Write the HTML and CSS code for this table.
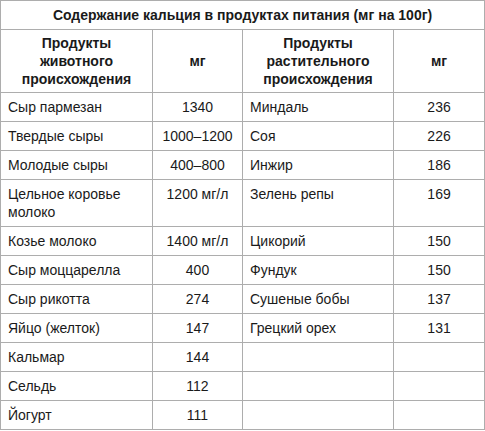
FILE: index.html
```html
<!DOCTYPE html>
<html lang="ru">
<head>
<meta charset="utf-8">
<title>Содержание кальция</title>
<link rel="stylesheet" href="styles.css">
</head>
<body>
<table class="calcium">
  <colgroup>
    <col class="c-name"><col class="c-val"><col class="c-name2"><col class="c-val2">
  </colgroup>
  <thead>
    <tr><th class="title" colspan="4">Содержание кальция в продуктах питания (мг на 100г)</th></tr>
    <tr class="head">
      <th>Продукты<br>животного<br>происхождения</th>
      <th>мг</th>
      <th>Продукты<br>растительного<br>происхождения</th>
      <th>мг</th>
    </tr>
  </thead>
  <tbody>
    <tr><td>Сыр пармезан</td><td class="num">1340</td><td>Миндаль</td><td class="num">236</td></tr>
    <tr><td>Твердые сыры</td><td class="num">1000–1200</td><td>Соя</td><td class="num">226</td></tr>
    <tr><td>Молодые сыры</td><td class="num">400–800</td><td>Инжир</td><td class="num">186</td></tr>
    <tr><td>Цельное коровье молоко</td><td class="num">1200 мг/л</td><td>Зелень репы</td><td class="num">169</td></tr>
    <tr><td>Козье молоко</td><td class="num">1400 мг/л</td><td>Цикорий</td><td class="num">150</td></tr>
    <tr><td>Сыр моццарелла</td><td class="num">400</td><td>Фундук</td><td class="num">150</td></tr>
    <tr><td>Сыр рикотта</td><td class="num">274</td><td>Сушеные бобы</td><td class="num">137</td></tr>
    <tr><td>Яйцо (желток)</td><td class="num">147</td><td>Грецкий орех</td><td class="num">131</td></tr>
    <tr><td>Кальмар</td><td class="num">144</td><td></td><td></td></tr>
    <tr><td>Сельдь</td><td class="num">112</td><td></td><td></td></tr>
    <tr><td>Йогурт</td><td class="num">111</td><td></td><td></td></tr>
  </tbody>
</table>
</body>
</html>
```
FILE: styles.css
```css
html, body {
  margin: 0;
  padding: 0;
  background: #ffffff;
}
.calcium {
  border-collapse: collapse;
  table-layout: fixed;
  width: 485px;
  font-family: "Liberation Sans", Arial, sans-serif;
  font-size: 14px;
  line-height: 18px;
  color: #1a1a1a;
}
.c-name { width: 152px; }
.c-val { width: 90px; }
.c-name2 { width: 151px; }
.c-val2 { width: 91px; }
.calcium th,
.calcium td {
  border: 1px solid #adadad;
  padding: 5px 6px 5px 7px;
  vertical-align: top;
  text-align: left;
}
.calcium th {
  font-weight: bold;
  text-align: center;
  vertical-align: middle;
}
.calcium .title {
  padding: 5px 6px;
}
.head th {
  padding: 4px 6px;
}
.calcium td.num {
  text-align: center;
  padding-left: 6px;
}
.calcium tbody tr {
  height: 29px;
}
```
